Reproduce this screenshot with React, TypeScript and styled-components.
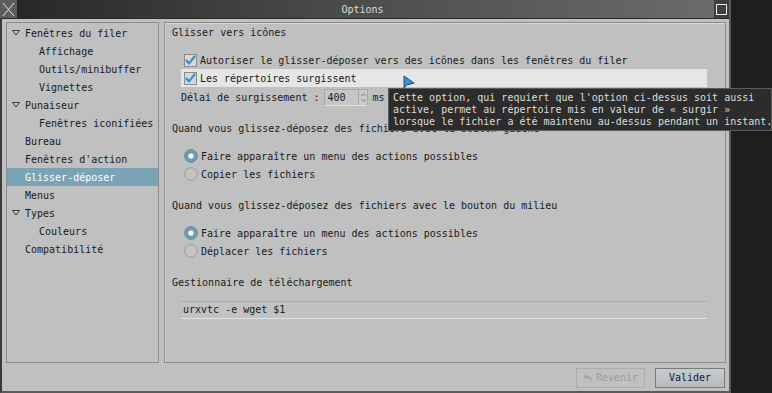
import React from "react";
import styled, { createGlobalStyle } from "styled-components";

const Global = createGlobalStyle`
  html, body { margin: 0; padding: 0; background: #1e1e1e; }
  body { font-family: "DejaVu Sans Mono", "Liberation Mono", monospace; font-size: 10px; }
  * { box-sizing: border-box; }
`;

const Page = styled.div`
  position: relative;
  width: 772px;
  height: 393px;
  overflow: hidden;
  background: #1e1e1e;
`;

const Window = styled.div`
  width: 731px;
  height: 393px;
  display: flex;
  flex-direction: column;
  background: #c0c0c0;
  border-left: 2px solid #3a3a3a;
  border-right: 2px solid #5a5a5a;
  border-bottom: 2px solid #5a5a5a;
`;

const TitleBar = styled.div`
  height: 19px;
  display: flex;
  align-items: stretch;
  background: linear-gradient(to right, #262626 0%, #4a4a4a 45%, #6c6c6c 100%);
  border-bottom: 1px solid #2a2a2a;
`;

const TitleButton = styled.div<{ $side: "left" | "right" }>`
  width: ${(p) => (p.$side === "left" ? "17px" : "15px")};
  display: flex;
  align-items: center;
  justify-content: center;
  background: ${(p) => (p.$side === "left" ? "#5c5c5c" : "#3e3e3e")};
  margin-left: ${(p) => (p.$side === "left" ? "-2px" : "0")};
`;

const Title = styled.div`
  flex: 1;
  text-align: center;
  color: #dcdcdc;
  line-height: 19px;
  padding-right: 6px;
`;

const Body = styled.div`
  flex: 1;
  display: flex;
  gap: 5px;
  padding: 3px 3px 0 4px;
`;

const Tree = styled.div`
  width: 153px;
  border: 1px solid #8c8c8c;
  padding-top: 1px;
  color: #1a1a1a;
`;

const TreeRow = styled.div<{ $level: number; $selected?: boolean }>`
  height: 18px;
  display: flex;
  align-items: center;
  padding-left: ${(p) => (p.$level === 0 ? 3 : 32)}px;
  background: ${(p) => (p.$selected ? "#7aa4b6" : "transparent")};
  color: ${(p) => (p.$selected ? "#ffffff" : "#1a1a1a")};
  white-space: pre;
`;

const Expander = styled.span`
  width: 15px;
  display: inline-flex;
  align-items: center;
  justify-content: flex-start;
  padding-left: 2px;
`;

const Frame = styled.div`
  flex: 1;
  border: 1px solid #8c8c8c;
  box-shadow: inset 1px 1px 0 #d6d6d6;
  padding: 1px 18px 0 7px;
  color: #1a1a1a;
`;

const Section = styled.div<{ $gap: number }>`
  margin-bottom: ${(p) => p.$gap}px;
`;

const Header = styled.div`
  height: 18px;
  line-height: 18px;
  white-space: pre;
`;

const SectionBody = styled.div`
  margin-top: 9px;
  padding-left: 9px;
`;

const OptionRow = styled.div<{ $hover?: boolean }>`
  height: 18px;
  display: flex;
  align-items: center;
  gap: 3px;
  padding-left: 3px;
  background: ${(p) => (p.$hover ? "#e6e6e6" : "transparent")};
  white-space: pre;
`;

const SpinRow = styled.div`
  height: 20px;
  display: flex;
  align-items: center;
  white-space: pre;
`;

const SpinBox = styled.div`
  margin-left: 5px;
  width: 44px;
  height: 17px;
  display: flex;
  border: 1px solid #a8a8a8;
  border-bottom-color: #e2e2e2;
  background: #c6c6c6;
`;

const SpinText = styled.div`
  flex: 1;
  line-height: 15px;
  padding-left: 2px;
`;

const SpinArrows = styled.div`
  width: 9px;
  border-left: 1px solid #a8a8a8;
  display: flex;
  flex-direction: column;
  align-items: center;
  justify-content: center;
  background: #cacaca;
`;

const Unit = styled.span`
  margin-left: 4px;
`;

const Entry = styled.div`
  height: 18px;
  line-height: 16px;
  padding-left: 2px;
  border-top: 1px solid #acacac;
  border-bottom: 1px solid #e2e2e2;
  background: #c2c2c2;
`;

const Footer = styled.div`
  height: 28px;
  display: flex;
  justify-content: flex-end;
  align-items: center;
  gap: 10px;
  padding: 1px 4px 0 0;
`;

const Button = styled.div<{ $disabled?: boolean }>`
  height: 20px;
  width: ${(p) => (p.$disabled ? "69px" : "70px")};
  display: flex;
  align-items: center;
  justify-content: center;
  gap: 3px;
  border: 1px solid ${(p) => (p.$disabled ? "#acacac" : "#7a7a7a")};
  color: ${(p) => (p.$disabled ? "#9c9c9c" : "#1a1a1a")};
  background: ${(p) =>
    p.$disabled ? "#c0c0c0" : "linear-gradient(#c4ccd0, #b4bcc2)"};
`;

const Tooltip = styled.div`
  position: absolute;
  left: 388px;
  top: 88px;
  width: 384px;
  padding: 3px 0 2px 4px;
  background: #2c2c2c;
  border: 1px solid #5c5c5c;
  color: #dedede;
  line-height: 12px;
  white-space: pre;
`;

const Cursor = styled.svg`
  position: absolute;
  left: 403px;
  top: 75px;
`;

const Triangle = () => (
  <svg width="8" height="6" viewBox="0 0 8 6">
    <path d="M0.5 0.5 H7.5 L4 5 Z" fill="none" stroke="#3a3a3a" strokeWidth="1" />
  </svg>
);

const Check = () => (
  <svg width="13" height="13" viewBox="0 0 13 13">
    <rect x="0.5" y="0.5" width="12" height="12" fill="#d8d8d8" stroke="#8a8a8a" />
    <path d="M2.5 6.5 L5 9.5 L10.5 2.5" fill="none" stroke="#3d8fcc" strokeWidth="2.2" strokeLinecap="round" strokeLinejoin="round" />
  </svg>
);

const Radio = ({ on }: { on?: boolean }) => (
  <svg width="14" height="14" viewBox="0 0 14 14">
    {on ? (
      <>
        <circle cx="7" cy="7" r="6.3" fill="#6f9db2" stroke="#5b889c" />
        <circle cx="7" cy="7" r="2.6" fill="#ffffff" />
      </>
    ) : (
      <circle cx="7" cy="7" r="6.3" fill="#c4c4c4" stroke="#9a9a9a" />
    )}
  </svg>
);

const treeItems: { label: string; level: number; exp?: boolean; sel?: boolean }[] = [
  { label: "Fenêtres du filer", level: 0, exp: true },
  { label: "Affichage", level: 1 },
  { label: "Outils/minibuffer", level: 1 },
  { label: "Vignettes", level: 1 },
  { label: "Punaiseur", level: 0, exp: true },
  { label: "Fenêtres iconifiées", level: 1 },
  { label: "Bureau", level: 0 },
  { label: "Fenêtres d'action", level: 0 },
  { label: "Glisser-déposer", level: 0, sel: true },
  { label: "Menus", level: 0 },
  { label: "Types", level: 0, exp: true },
  { label: "Couleurs", level: 1 },
  { label: "Compatibilité", level: 0 },
];

export default function App() {
  return (
    <Page>
      <Global />
      <Window>
        <TitleBar>
          <TitleButton $side="left">
            <svg width="13" height="15" viewBox="0 0 13 15">
              <path d="M1 1 L12 14 M12 1 L1 14" stroke="#e8e8e8" strokeWidth="1" />
            </svg>
          </TitleButton>
          <Title>Options</Title>
          <TitleButton $side="right">
            <svg width="11" height="11" viewBox="0 0 11 11">
              <rect x="0.5" y="0.5" width="10" height="10" fill="none" stroke="#ececec" />
            </svg>
          </TitleButton>
        </TitleBar>
        <Body>
          <Tree>
            {treeItems.map((t) => (
              <TreeRow key={t.label} $level={t.level} $selected={t.sel}>
                {t.level === 0 && <Expander>{t.exp && <Triangle />}</Expander>}
                {t.label}
              </TreeRow>
            ))}
          </Tree>
          <Frame>
            <Section $gap={13}>
              <Header>Glisser vers icônes</Header>
              <SectionBody>
                <OptionRow>
                  <Check />
                  Autoriser le glisser-déposer vers des icônes dans les fenêtres du filer
                </OptionRow>
                <OptionRow $hover>
                  <Check />
                  Les répertoires surgissent
                </OptionRow>
                <SpinRow>
                  Délai de surgissement :
                  <SpinBox>
                    <SpinText>400</SpinText>
                    <SpinArrows>
                      <svg width="5" height="11" viewBox="0 0 5 11">
                        <path d="M0.5 4 L2.5 1.5 L4.5 4 M0.5 7 L2.5 9.5 L4.5 7" fill="none" stroke="#7a7a7a" />
                      </svg>
                    </SpinArrows>
                  </SpinBox>
                  <Unit>ms</Unit>
                </SpinRow>
              </SectionBody>
            </Section>
            <Section $gap={14}>
              <Header>Quand vous glissez-déposez des fichiers avec le bouton gauche</Header>
              <SectionBody>
                <OptionRow>
                  <Radio on />
                  Faire apparaître un menu des actions possibles
                </OptionRow>
                <OptionRow>
                  <Radio />
                  Copier les fichiers
                </OptionRow>
              </SectionBody>
            </Section>
            <Section $gap={14}>
              <Header>Quand vous glissez-déposez des fichiers avec le bouton du milieu</Header>
              <SectionBody>
                <OptionRow>
                  <Radio on />
                  Faire apparaître un menu des actions possibles
                </OptionRow>
                <OptionRow>
                  <Radio />
                  Déplacer les fichiers
                </OptionRow>
              </SectionBody>
            </Section>
            <Section $gap={0}>
              <Header>Gestionnaire de téléchargement</Header>
              <SectionBody>
                <Entry>urxvtc -e wget $1</Entry>
              </SectionBody>
            </Section>
          </Frame>
        </Body>
        <Footer>
          <Button $disabled>
            <svg width="10" height="10" viewBox="0 0 10 10">
              <path d="M4 1 L0.5 4 L4 7 V5 C6.5 5 8 6 8.5 9 C9.5 5 7.5 3 4 3 Z" fill="#a4a4a4" />
            </svg>
            Revenir
          </Button>
          <Button>Valider</Button>
        </Footer>
      </Window>
      <Tooltip>
        {"Cette option, qui requiert que l'option ci-dessus soit aussi\nactive, permet au répertoire mis en valeur de « surgir »\nlorsque le fichier a été maintenu au-dessus pendant un instant."}
      </Tooltip>
      <Cursor width="12" height="16" viewBox="0 0 12 16">
        <path d="M1 1 L1 13 L4 10 L11 8 Z" fill="#3d8fd6" stroke="#1d4f7a" strokeWidth="1" strokeLinejoin="round" />
      </Cursor>
    </Page>
  );
}
